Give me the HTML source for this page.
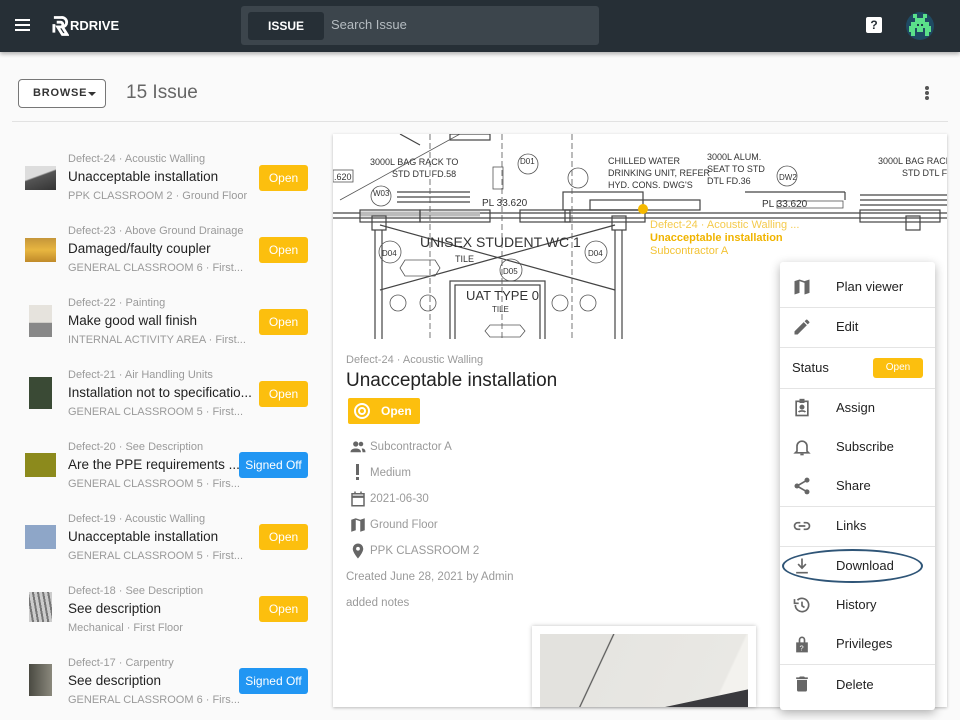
<!DOCTYPE html>
<html><head><meta charset="utf-8"><style>
*{margin:0;padding:0;box-sizing:border-box}
html,body{width:960px;height:720px;overflow:hidden}
body{background:#fafafa;font-family:"Liberation Sans",sans-serif;position:relative;color:#222}
#wrap{position:absolute;left:0;top:0;width:960px;height:720px;overflow:hidden}
.hdr{position:absolute;left:0;top:0;width:960px;height:52px;background:#262f36;box-shadow:0 2px 4px rgba(0,0,0,.3)}
.abs{position:absolute}
.search{left:241px;top:6px;width:358px;height:39px;background:#3c454c;border-radius:3px}
.tab{left:248px;top:12px;width:76px;height:28px;background:#262f36;border-radius:3px;color:#fff;font-size:12px;font-weight:bold;text-align:center;line-height:28px}
.item .thumb{position:absolute;left:25px;width:31px;height:24px}
.meta{position:absolute;left:68px;font-size:11px;color:#9a9a9a;white-space:nowrap}
.title{position:absolute;left:68px;font-size:13.5px;color:#222;white-space:nowrap}
.sub{position:absolute;left:68px;font-size:11px;color:#9a9a9a;white-space:nowrap}
.badge{position:absolute;left:259px;width:49px;height:26px;background:#fcbf0e;color:#fff;font-size:12px;text-align:center;line-height:26px;border-radius:3px;white-space:nowrap}
.badge.s{left:239px;width:69px;background:#2196f3}
.card{left:333px;top:134px;width:614px;height:573px;background:#fff;box-shadow:0 1px 3px rgba(0,0,0,.25)}
.det{position:absolute;left:370px;font-size:11.5px;color:#9a9a9a;white-space:nowrap}
.ico{position:absolute;left:349px;width:18px;height:18px}
.menu{left:780px;top:262px;width:155px;height:448px;background:#fff;box-shadow:0 3px 10px rgba(0,0,0,.3);border-radius:3px}
.mi{position:absolute;left:56px;font-size:13px;color:#222}
.mic{position:absolute;left:12px;width:20px;height:20px}
.hr{position:absolute;left:0;width:155px;height:1px;background:#e4e4e4}
</style></head><body><div id="wrap">
<div class="hdr">
 <div class="abs" style="left:15px;top:19px;width:15px;height:2px;background:#fff;box-shadow:0 5px 0 #fff,0 10px 0 #fff"></div>
 <svg class="abs" style="left:52px;top:15px" width="17" height="22" viewBox="0 0 18 22"><path d="M2 2h8a5 5 0 0 1 1 10l5 8h-5l-5-8h3a2 2 0 0 0 0-5H5" fill="none" stroke="#fff" stroke-width="3"/><path d="M2 9v9" stroke="#fff" stroke-width="3"/></svg>
 <div class="abs" style="left:70px;top:18px;color:#fff;font-size:13px;font-weight:bold">RDRIVE</div>
 <div class="abs search"></div>
 <div class="abs tab">ISSUE</div>
 <div class="abs" style="left:331px;top:17px;color:#b5bcc1;font-size:13px">Search Issue</div>
 <div class="abs" style="left:866px;top:17px;width:16px;height:16px;background:#fff;border-radius:2px;color:#262f36;font-size:12px;font-weight:bold;text-align:center;line-height:16px">?</div>
 <div class="abs" style="left:906px;top:12px;width:28px;height:28px;border-radius:50%;background:#1f4a63"></div>
 <svg class="abs" style="left:909px;top:14px" width="22" height="24" viewBox="0 0 11 12"><g fill="#5be08a"><rect x="2" y="0" width="2" height="2"/><rect x="7" y="0" width="2" height="2"/><rect x="3" y="2" width="5" height="2"/><rect x="1" y="4" width="9" height="3"/><rect x="0" y="6" width="3" height="3"/><rect x="8" y="6" width="3" height="3"/><rect x="4" y="7" width="3" height="2"/><rect x="1" y="9" width="2" height="2"/><rect x="8" y="9" width="2" height="2"/></g><rect x="4" y="5" width="1" height="1" fill="#1d3a4a"/><rect x="6" y="5" width="1" height="1" fill="#1d3a4a"/></svg>
</div>
<div class="abs" style="left:18px;top:79px;width:88px;height:29px;border:1px solid #777;border-radius:4px;background:#fff"></div>
<div class="abs" style="left:33px;top:87px;font-size:11px;font-weight:bold;letter-spacing:0.8px;color:#333;white-space:nowrap">BROWSE</div>
<div class="abs" style="left:88px;top:92px;width:0;height:0;border-left:4px solid transparent;border-right:4px solid transparent;border-top:4px solid #333"></div>
<div class="abs" style="left:126px;top:82px;font-size:19px;color:#666">15 Issue</div>
<div class="abs" style="left:925px;top:86px;width:4px;height:4px;border-radius:50%;background:#555;box-shadow:0 5px 0 #555,0 10px 0 #555"></div>
<div class="abs" style="left:12px;top:121px;width:936px;height:1px;background:#e2e2e2"></div>

<div class="item">
 <div class="abs thumb" style="top:166px;background:linear-gradient(160deg,#ddd 40%,#555 45%,#333)"></div>
 <div class="meta" style="top:153px">Defect-24 · Acoustic Walling</div><div class="title" style="top:169px">Unacceptable installation</div><div class="sub" style="top:190px">PPK CLASSROOM 2 · Ground Floor</div><div class="badge" style="top:165px">Open</div>
 <div class="abs thumb" style="top:238px;background:linear-gradient(#c5963a,#e8b640 50%,#c08a2a)"></div>
 <div class="meta" style="top:225px">Defect-23 · Above Ground Drainage</div><div class="title" style="top:241px">Damaged/faulty coupler</div><div class="sub" style="top:262px">GENERAL CLASSROOM 6 · First...</div><div class="badge" style="top:237px">Open</div>
 <div class="abs" style="left:29px;top:305px;width:23px;height:32px;background:linear-gradient(#e6e3dd 55%,#888 56%)"></div>
 <div class="meta" style="top:297px">Defect-22 · Painting</div><div class="title" style="top:313px">Make good wall finish</div><div class="sub" style="top:334px">INTERNAL ACTIVITY AREA · First...</div><div class="badge" style="top:309px">Open</div>
 <div class="abs" style="left:29px;top:377px;width:23px;height:32px;background:#3a4a35"></div>
 <div class="meta" style="top:369px">Defect-21 · Air Handling Units</div><div class="title" style="top:385px">Installation not to specificatio...</div><div class="sub" style="top:406px">GENERAL CLASSROOM 5 · First...</div><div class="badge" style="top:381px">Open</div>
 <div class="abs thumb" style="top:453px;background:#8c8a1c"></div>
 <div class="meta" style="top:441px">Defect-20 · See Description</div><div class="title" style="top:457px">Are the PPE requirements ...</div><div class="sub" style="top:478px">GENERAL CLASSROOM 5 · Firs...</div><div class="badge s" style="top:452px">Signed Off</div>
 <div class="abs thumb" style="top:525px;background:#8ea6c8"></div>
 <div class="meta" style="top:513px">Defect-19 · Acoustic Walling</div><div class="title" style="top:529px">Unacceptable installation</div><div class="sub" style="top:550px">GENERAL CLASSROOM 5 · First...</div><div class="badge" style="top:524px">Open</div>
 <div class="abs" style="left:29px;top:592px;width:23px;height:30px;background:repeating-linear-gradient(80deg,#ccc 0 3px,#777 3px 5px)"></div>
 <div class="meta" style="top:585px">Defect-18 · See Description</div><div class="title" style="top:601px">See description</div><div class="sub" style="top:622px">Mechanical · First Floor</div><div class="badge" style="top:596px">Open</div>
 <div class="abs" style="left:29px;top:664px;width:23px;height:32px;background:linear-gradient(90deg,#4a4a42,#8a887c)"></div>
 <div class="meta" style="top:657px">Defect-17 · Carpentry</div><div class="title" style="top:673px">See description</div><div class="sub" style="top:694px">GENERAL CLASSROOM 6 · Firs...</div><div class="badge s" style="top:668px">Signed Off</div>
</div>

<div class="abs card"></div>
<svg class="abs" style="left:333px;top:134px" width="614" height="205" viewBox="333 134 614 205" font-family="Liberation Sans Narrow, Liberation Sans, sans-serif" fill="none" stroke="#333" stroke-width="1">
 <rect x="333" y="134" width="614" height="205" fill="#fff" stroke="none"/>
 <g stroke="#444" stroke-width="1.2">
 <line x1="333" y1="213" x2="947" y2="213"/><line x1="333" y1="218" x2="947" y2="218"/><line x1="360" y1="214" x2="480" y2="214" stroke-width="5" stroke="#bbb"/>
 <rect x="360" y="210" width="60" height="12"/><rect x="420" y="210" width="70" height="12"/><rect x="520" y="210" width="50" height="12"/><rect x="565" y="210" width="80" height="12"/><rect x="860" y="210" width="80" height="12"/>
 <rect x="372" y="216" width="14" height="14"/><rect x="612" y="216" width="14" height="14"/><rect x="906" y="216" width="14" height="14"/>
 <line x1="375" y1="230" x2="375" y2="339"/><line x1="382" y1="230" x2="382" y2="339"/><line x1="615" y1="230" x2="615" y2="339"/><line x1="622" y1="230" x2="622" y2="339"/>
 <rect x="450" y="281" width="95" height="60"/><rect x="455" y="285" width="85" height="56"/>
 <line x1="380" y1="225" x2="615" y2="290"/><line x1="380" y1="290" x2="615" y2="225"/>
 <line x1="397" y1="192" x2="470" y2="192"/><line x1="397" y1="197" x2="470" y2="197"/><line x1="397" y1="202" x2="470" y2="202"/>
 <line x1="745" y1="192" x2="845" y2="192"/><line x1="845" y1="192" x2="845" y2="200"/>
 <line x1="860" y1="195" x2="947" y2="195"/><line x1="860" y1="200" x2="947" y2="200"/><line x1="860" y1="205" x2="947" y2="205"/>
 <rect x="563" y="192" width="80" height="18"/><rect x="590" y="200" width="110" height="10"/>
 <line x1="400" y1="134" x2="420" y2="145"/><rect x="450" y="134" width="40" height="6"/>
 </g>
 <g stroke="#555" stroke-width="0.8">
 <circle cx="381" cy="196" r="10"/><circle cx="528" cy="164" r="10"/><circle cx="578" cy="178" r="10"/><circle cx="787" cy="176" r="10"/>
 <circle cx="390" cy="252" r="11"/><circle cx="596" cy="252" r="11"/><circle cx="511" cy="270" r="11"/>
 <circle cx="398" cy="303" r="8"/><circle cx="428" cy="303" r="8"/><circle cx="560" cy="303" r="8"/><circle cx="588" cy="303" r="8"/>
 <path d="M405 260h30l5 8-5 8h-30l-5-8z"/><path d="M490 325h30l5 6-5 6h-30l-5-6z"/>
 <rect x="493" y="167" width="10" height="22"/><rect x="333" y="170" width="20" height="12"/>
 <rect x="777" y="201" width="66" height="7"/>
 <line x1="460" y1="134" x2="340" y2="200"/><line x1="430" y1="134" x2="430" y2="339" stroke-dasharray="6 3"/><line x1="502" y1="134" x2="502" y2="339" stroke-dasharray="6 3"/><line x1="572" y1="134" x2="572" y2="339" stroke-dasharray="6 3"/>
 </g>
 <g fill="#333" stroke="none" font-size="9">
 <text x="370" y="165">3000L BAG RACK TO</text><text x="392" y="177">STD DTL FD.58</text>
 <text x="608" y="164">CHILLED WATER</text><text x="608" y="176">DRINKING UNIT, REFER</text><text x="608" y="188">HYD. CONS. DWG'S</text>
 <text x="707" y="160">3000L ALUM.</text><text x="707" y="172">SEAT TO STD</text><text x="707" y="184">DTL FD.36</text>
 <text x="878" y="164">3000L BAG RACK</text><text x="902" y="176">STD DTL FD</text>
 <text x="334" y="180">.620</text><text x="482" y="206" font-size="10">PL 33.620</text>
 <text x="762" y="207" font-size="10">PL 33.620</text>
 <text x="420" y="247" font-size="14">UNISEX STUDENT WC 1</text><text x="466" y="300" font-size="13">UAT TYPE 0</text>
 <text x="455" y="262" font-size="9">TILE</text><text x="492" y="312" font-size="8">TILE</text>
 <text x="520" y="164" font-size="8">D01</text><text x="373" y="196" font-size="8">W03</text><text x="382" y="256" font-size="8">D04</text><text x="588" y="256" font-size="8">D04</text><text x="503" y="274" font-size="8">D05</text><text x="779" y="180" font-size="8">DW2</text>
 </g>
 <circle cx="643" cy="209" r="5" fill="#f5b900" stroke="none"/>
 <g fill="#f0b400" stroke="none" font-size="11">
 <text x="650" y="228" opacity=".7">Defect-24 · Acoustic Walling ...</text>
 <text x="650" y="241" font-weight="bold">Unacceptable installation</text>
 <text x="650" y="254" opacity=".8">Subcontractor A</text>
 </g>
</svg>
<div class="det" style="left:346px;top:354px;font-size:11px">Defect-24 · Acoustic Walling</div>
<div class="abs" style="left:346px;top:370px;font-size:19px;color:#222">Unacceptable installation</div>
<div class="abs" style="left:348px;top:398px;width:72px;height:26px;background:#fcbf0e;border-radius:2px;color:#fff;font-size:12px;font-weight:bold;line-height:26px;padding-left:33px">Open</div>
<svg class="abs" style="left:353px;top:402px" width="18" height="18" viewBox="0 0 18 18" fill="none" stroke="#fff" stroke-width="2"><circle cx="9" cy="9" r="7"/><circle cx="9" cy="9" r="3"/></svg>
<svg class="ico" style="top:438px" viewBox="0 0 24 24" fill="#666"><circle cx="9" cy="8" r="3.5"/><circle cx="16" cy="8" r="3"/><path d="M2 19c0-4 4-5 7-5s7 1 7 5zM17 14c3 0 5 1 5 5h-4c0-2-1-4-1-5z"/></svg>
<div class="det" style="top:441px">Subcontractor A</div>
<div class="abs" style="left:356px;top:464px;width:3px;height:11px;background:#666"></div><div class="abs" style="left:356px;top:477px;width:3px;height:3px;background:#666"></div>
<div class="det" style="top:467px">Medium</div>
<svg class="ico" style="top:490px" viewBox="0 0 24 24" fill="none" stroke="#666" stroke-width="2"><rect x="4" y="5" width="16" height="16"/><line x1="4" y1="9" x2="20" y2="9" stroke-width="3"/><line x1="8" y1="2" x2="8" y2="6"/><line x1="16" y1="2" x2="16" y2="6"/></svg>
<div class="det" style="top:493px">2021-06-30</div>
<svg class="ico" style="top:516px" viewBox="0 0 24 24" fill="#666"><path d="M3 5l6-2 6 2 6-2v16l-6 2-6-2-6 2zM9 5v14l6 2V7z" fill-rule="evenodd"/></svg>
<div class="det" style="top:519px">Ground Floor</div>
<svg class="ico" style="top:542px" viewBox="0 0 24 24" fill="#666"><path d="M12 2a7 7 0 0 0-7 7c0 5 7 13 7 13s7-8 7-13a7 7 0 0 0-7-7zm0 9.5a2.5 2.5 0 1 1 0-5 2.5 2.5 0 0 1 0 5z"/></svg>
<div class="det" style="top:545px">PPK CLASSROOM 2</div>
<div class="det" style="left:346px;top:571px">Created June 28, 2021 by Admin</div>
<div class="det" style="left:346px;top:597px">added notes</div>
<div class="abs" style="left:532px;top:626px;width:224px;height:81px;background:#fff;box-shadow:0 0 4px rgba(0,0,0,.25)"></div>
<div class="abs" style="left:540px;top:634px;width:208px;height:73px;background:linear-gradient(115deg,#e3e2de 30%,#444 30.5%,#e6e5e1 31%,#e9e8e4 85%,#f3f2ee 86%);overflow:hidden"><div style="position:absolute;left:70px;top:62px;width:220px;height:60px;background:#3a3a3e;transform:rotate(-12deg)"></div></div>

<div class="abs menu">
 <svg class="mic" style="top:15px" viewBox="0 0 24 24" fill="#666"><path d="M3 5l6-2 6 2 6-2v16l-6 2-6-2-6 2zM9 5v14l6 2V7z" fill-rule="evenodd"/></svg>
 <div class="mi" style="top:17px">Plan viewer</div>
 <div class="hr" style="top:45px"></div>
 <svg class="mic" style="top:55px" viewBox="0 0 24 24" fill="#666"><path d="M3 17.25V21h3.75L17.8 9.94l-3.75-3.75zM20.7 7.04a1 1 0 0 0 0-1.41l-2.34-2.34a1 1 0 0 0-1.41 0l-1.830 1.83 3.75 3.75z"/></svg>
 <div class="mi" style="top:57px">Edit</div>
 <div class="hr" style="top:85px"></div>
 <div class="mi" style="left:12px;top:98px">Status</div>
 <div class="abs" style="left:93px;top:96px;width:50px;height:20px;background:#fcbf0e;border-radius:3px;color:#fff;font-size:10px;text-align:center;line-height:20px">Open</div>
 <div class="hr" style="top:126px"></div>
 <svg class="mic" style="top:136px" viewBox="0 0 24 24" fill="none" stroke="#666" stroke-width="2"><rect x="5" y="4" width="14" height="17"/><rect x="10" y="2" width="4" height="3" fill="#666"/><circle cx="12" cy="11" r="2" fill="#666"/><path d="M8 17c1-2 7-2 8 0" /></svg>
 <div class="mi" style="top:138px">Assign</div>
 <svg class="mic" style="top:175px" viewBox="0 0 24 24" fill="none" stroke="#666" stroke-width="2"><path d="M6 17V11a6 6 0 0 1 12 0v6l2 2H4z"/><path d="M10 21h4"/></svg>
 <div class="mi" style="top:177px">Subscribe</div>
 <svg class="mic" style="top:214px" viewBox="0 0 24 24" fill="#666"><circle cx="18" cy="5" r="3"/><circle cx="6" cy="12" r="3"/><circle cx="18" cy="19" r="3"/><path d="M6 12L18 5M6 12l12 7" stroke="#666" stroke-width="2"/></svg>
 <div class="mi" style="top:216px">Share</div>
 <div class="hr" style="top:244px"></div>
 <svg class="mic" style="top:254px" viewBox="0 0 24 24" fill="none" stroke="#666" stroke-width="2"><path d="M10 8H7a4 4 0 0 0 0 8h3M14 8h3a4 4 0 0 1 0 8h-3M8 12h8"/></svg>
 <div class="mi" style="top:256px">Links</div>
 <div class="hr" style="top:284px"></div>
 <svg class="mic" style="top:294px" viewBox="0 0 24 24" fill="#666"><path d="M11 3h2v9l3-3 1.4 1.4L12 16l-5.4-5.6L8 9l3 3zM5 19h14v2H5z"/></svg>
 <div class="mi" style="top:296px">Download</div>
 <svg class="mic" style="top:333px" viewBox="0 0 24 24" fill="none" stroke="#666" stroke-width="2"><path d="M4 12a8 8 0 1 0 2.5-5.8"/><path d="M3 5v5h5"/><path d="M12 8v5l3 2"/></svg>
 <div class="mi" style="top:335px">History</div>
 <svg class="mic" style="top:372px" viewBox="0 0 24 24" fill="#666"><path d="M8 10V7a4 4 0 0 1 8 0v3h-2V7a2 2 0 0 0-4 0v3zM5 10h14v12H5z"/><text x="9" y="20" font-size="9" fill="#fff" font-family="Liberation Sans">?</text></svg>
 <div class="mi" style="top:374px">Privileges</div>
 <div class="hr" style="top:402px"></div>
 <svg class="mic" style="top:412px" viewBox="0 0 24 24" fill="#666"><path d="M6 19a2 2 0 0 0 2 2h8a2 2 0 0 0 2-2V7H6zM19 4h-3.5l-1-1h-5l-1 1H5v2h14z"/></svg>
 <div class="mi" style="top:415px">Delete</div>
</div>
<div class="abs" style="left:782px;top:549px;width:141px;height:34px;border:2px solid #2f5577;border-radius:50%"></div>
</div></body></html>
